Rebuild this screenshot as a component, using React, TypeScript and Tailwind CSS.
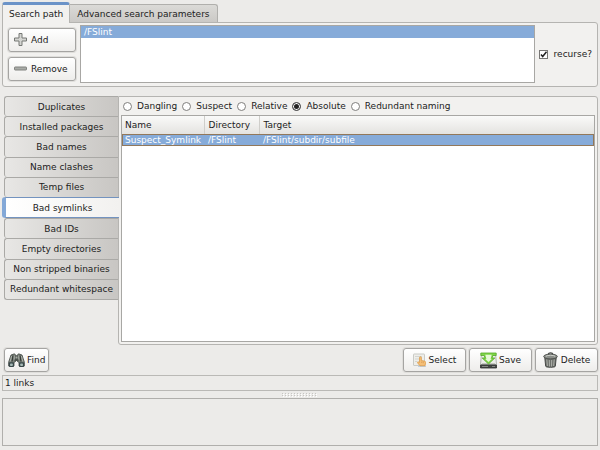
import { useState } from 'react';
import type { ReactNode } from 'react';

const CHECKS = [
  'Duplicates',
  'Installed packages',
  'Bad names',
  'Name clashes',
  'Temp files',
  'Bad symlinks',
  'Bad IDs',
  'Empty directories',
  'Non stripped binaries',
  'Redundant whitespace',
];

const LINK_TYPES = ['Dangling', 'Suspect', 'Relative', 'Absolute', 'Redundant naming'];

const LINKS = [{ name: 'Suspect_Symlink', dir: '/FSlint', target: '/FSlint/subdir/subfile' }];

function PlusIcon() {
  return (
    <svg width="13" height="13" viewBox="0 0 13 13">
      <path d="M5 .5h3V5h4.500v3H8v4.500H5V8H.5V5H5z" fill="#d4d5d2" stroke="#767875" />
    </svg>
  );
}

function MinusIcon() {
  return (
    <svg width="13" height="13" viewBox="0 0 13 13">
      <rect x=".5" y="5" width="12" height="3" rx=".6" fill="#a9aba7" stroke="#80827f" />
    </svg>
  );
}

function BinocularsIcon() {
  return (
    <svg width="17" height="16" viewBox="0 0 17 16">
      <path d="M3 3 6.500 1.800 8 3.500V9L6 10.500V14H.7V10z" fill="#7b827b" stroke="#414843" strokeWidth=".8" />
      <path d="M14 3 10.500 1.800 9 3.500V9l2 1.500V14h5.300V10z" fill="#7b827b" stroke="#414843" strokeWidth=".8" />
      <path d="M6.500 3.500h4V9h-4z" fill="#4c534e" />
      <path d="M7.500 4.500h2v2h-2z" fill="#a4aaa2" />
      <path d="M5 3.500 4 9.500M12 3.500l1 6" stroke="#343a36" strokeWidth="1.200" />
      <path d="M3.600 4 2.200 9.500M6.300 3.500v4M10.700 3.500v4M13.400 4l1.400 5.500" stroke="#b9beb6" strokeWidth=".8" />
      <rect x=".8" y="10.300" width="5.200" height="4.700" rx="1" fill="#39484a" />
      <rect x="11" y="10.300" width="5.200" height="4.700" rx="1" fill="#39484a" />
      <rect x="2" y="11.500" width="2.800" height="2.500" rx=".8" fill="#a5b8b5" />
      <rect x="12.200" y="11.500" width="2.800" height="2.500" rx=".8" fill="#a5b8b5" />
    </svg>
  );
}

function SelectIcon() {
  return (
    <svg width="13" height="16" viewBox="0 0 13 16">
      <rect x=".5" y="2" width="11" height="11.500" rx=".5" fill="#eeeeea" stroke="#c9cac5" />
      <path d="M2 4.500h7M2 7h4M2 9.500h2.500" stroke="#d3d4cf" />
      <path d="M5 14h8v1H5z" fill="#bfcfe2" />
      <path
        d="M6.500 5.500c0-1 1.900-1 1.900 0V8.500l3 .6c1 .2 1.300.8 1.200 1.600l-.5 3.100H7L4.700 11c-.6-1 .7-1.600 1.800-.6z"
        fill="#f5bf78"
        stroke="#d9953f"
        strokeWidth=".7"
      />
      <path d="M8.700 9.500v1.500M10.300 9.700v1.500" stroke="#cf9249" strokeWidth=".6" />
    </svg>
  );
}

function SaveIcon() {
  return (
    <svg width="17" height="17" viewBox="0 0 17 17">
      <path d="M1.500 1.500h14l1 11H.5z" fill="#eceeea" stroke="#a0a39d" strokeWidth=".8" />
      <path d="M2 11.500h13" stroke="#c5c8c1" />
      <path d="M.5 13h16v3H.5z" fill="#454846" stroke="#2c2f2d" strokeWidth=".8" />
      <path d="M2 14.500h6M12 14.500h3" stroke="#8b8e89" strokeWidth=".9" />
      <path d="M.8 1h15.400v2.500h-3.400L12 6h2.800l-6.300 6-6.300-6H5l-.8-2.500H.8z" fill="#7fd548" stroke="#55a92a" strokeWidth=".8" />
      <path d="M5.300 2.700h6.400l-1.100 4.400h1.100L8.500 10 5.300 7.100h1.100z" fill="#e6f9d6" />
    </svg>
  );
}

function TrashIcon() {
  return (
    <svg width="15" height="16" viewBox="0 0 15 16">
      <path d="M1.700 5h11.600l-1 9.300c-.2 1.300-9.400 1.300-9.600 0z" fill="#6d706b" stroke="#3a3c3a" strokeWidth=".9" />
      <path d="m3.800 7.500.6 6.500M6.300 8l.2 6.500M8.700 8l-.2 6.500M11.200 7.500l-.6 6.500" stroke="#b4b7b1" strokeWidth=".9" />
      <ellipse cx="7.500" cy="4.500" rx="6.800" ry="2.400" fill="#8b8e89" stroke="#4a4d4a" strokeWidth=".9" />
      <path d="M2.800 4.300C4.300 2.900 10.700 2.900 12.200 4.300" stroke="#d0d3cd" fill="none" />
      <path d="M5.300 2.600C5.300.3 9.700.3 9.700 2.600" stroke="#464946" strokeWidth="1.200" fill="none" />
    </svg>
  );
}

interface ButtonProps {
  icon: ReactNode;
  label: string;
  className: string;
}

function Button({ icon, label, className }: ButtonProps) {
  return (
    <button
      type="button"
      className={`flex items-center rounded-[3px] border border-[#a5a4a2] bg-linear-to-b from-white to-[#eeedeb] h-6 shadow-[0_0_0_1px_#dfdedb] ${className}`}
    >
      {icon}
      {label}
    </button>
  );
}

export default function App() {
  const [check, setCheck] = useState('Bad symlinks');
  const [linkType, setLinkType] = useState('Absolute');
  const [recurse, setRecurse] = useState(true);

  return (
    <div className="flex min-h-screen flex-col bg-[#ecebe9] px-0.5 pt-0.5 pb-1 font-['DejaVu_Sans',sans-serif] text-[9px] leading-3 text-[#1c1c1c]">
      {/* search path notebook */}
      <div role="tablist" className="flex items-end">
        <button
          type="button"
          role="tab"
          aria-selected="true"
          className="relative z-10 -mb-px h-[21px] rounded-t-[3px] border border-b-0 border-t-[3px] border-[#b5b4b1] border-t-[#6b93c8] bg-[#f2f1ef] px-1.5"
        >
          Search path
        </button>
        <button
          type="button"
          role="tab"
          aria-selected="false"
          className="h-[18px] rounded-tr-[3px] border border-b-0 border-l-0 border-[#b0afac] bg-linear-to-b from-[#dbdad7] to-[#cbc9c6] px-[7px]"
        >
          Advanced search parameters
        </button>
      </div>
      <section className="flex items-center gap-1 rounded-b-[3px] rounded-tr-[3px] border border-[#b5b4b1] bg-[#f2f1ef] pt-0.5 pr-[5px] pb-[3px] pl-[5px]">
        <div className="flex w-[68px] flex-col gap-[5px]">
          <Button icon={<PlusIcon />} label="Add" className="gap-1 px-[5px]" />
          <Button icon={<MinusIcon />} label="Remove" className="gap-1 px-[5px]" />
        </div>
        <ul className="h-[58px] flex-1 border border-[#a8a7a4] bg-white">
          <li className="bg-[#86abd9] px-[3px] text-white">/FSlint</li>
        </ul>
        <label className="flex items-center gap-1.5">
          <span className="relative flex">
            <input
              type="checkbox"
              checked={recurse}
              onChange={e => setRecurse(e.target.checked)}
              className="size-[9px] appearance-none border border-[#777674] bg-white"
            />
            {recurse && (
              <svg width="9" height="9" viewBox="0 0 9 9" className="pointer-events-none absolute inset-0">
                <path d="m2 4.500 1.700 2L7.500 1.800" fill="none" stroke="#222" strokeWidth="1.500" />
              </svg>
            )}
          </span>
          recurse?
        </label>
      </section>

      {/* checks notebook, tabs on the left */}
      <main className="mt-[9px] flex flex-1">
        <div role="tablist" className="flex h-[204px] w-[116px] flex-col pl-0.5">
          {CHECKS.map(name => (
            <button
              key={name}
              type="button"
              role="tab"
              aria-selected={name === check}
              onClick={() => setCheck(name)}
              className={`flex-1 rounded-l-[3px] border border-r-0 text-center whitespace-nowrap ${
                name === check
                  ? 'relative z-10 -mr-px -ml-0.5 border-l-4 border-[#7393bf] border-l-[#83a8d7] bg-linear-to-r from-white to-[#f2f1ef]'
                  : 'border-b-0 border-[#aaa9a6] bg-linear-to-r from-[#e8e7e5] to-[#c8c6c3] last:border-b'
              }`}
            >
              {name}
            </button>
          ))}
        </div>
        <section className="flex flex-1 flex-col rounded-r-[3px] rounded-bl-[3px] border border-[#b5b4b1] bg-[#f2f1ef] px-0.5 pb-0.5">
          <div className="flex h-[18px] items-center gap-[5px] pl-0.5">
            {LINK_TYPES.map(type => (
              <label key={type} className="flex items-center gap-[5px]">
                <input
                  type="radio"
                  name="link-type"
                  checked={type === linkType}
                  onChange={() => setLinkType(type)}
                  className="size-[9px] appearance-none rounded-full border border-[#807f7d] bg-white checked:border-[#555] checked:bg-[#222] checked:shadow-[inset_0_0_0_1px_white]"
                />
                {type}
              </label>
            ))}
          </div>
          <div className="flex-1 border border-[#a8a7a4] bg-white">
            <table className="w-full table-fixed border-collapse text-left">
              <thead>
                <tr className="h-[18px] bg-linear-to-b from-[#fafaf9] to-[#e4e3e0]">
                  <th className="w-[82px] border-r border-[#cfceca] px-[3px] py-0 font-normal">Name</th>
                  <th className="w-[55px] border-r border-[#cfceca] px-1 py-0 font-normal">Directory</th>
                  <th className="px-1 py-0 font-normal">Target</th>
                </tr>
              </thead>
              <tbody>
                {LINKS.map(link => (
                  <tr key={link.name} className="bg-[#86abd9] text-white outline outline-1 -outline-offset-1 outline-[#92785a]">
                    <td className="px-[3px] py-0 whitespace-nowrap">{link.name}</td>
                    <td className="px-1 py-0">{link.dir}</td>
                    <td className="px-1 py-0">{link.target}</td>
                  </tr>
                ))}
              </tbody>
            </table>
          </div>
        </section>
      </main>

      <div className="mt-[3px] flex gap-[3px] pl-0.5">
        <Button icon={<BinocularsIcon />} label="Find" className="mr-auto gap-0.5 px-[3px]" />
        <Button icon={<SelectIcon />} label="Select" className="w-[63px] justify-center gap-[3px]" />
        <Button icon={<SaveIcon />} label="Save" className="w-[63px] justify-center gap-0.5" />
        <Button icon={<TrashIcon />} label="Delete" className="w-[63px] justify-center gap-[3px]" />
      </div>

      <p role="status" className="mt-[3px] h-4 border border-[#bab9b6] px-0.5 py-px">1 links</p>
      <div className="flex h-[7px] items-center justify-center">
        <svg width="36" height="4">
          <defs>
            <pattern id="grip" width="3" height="2" patternUnits="userSpaceOnUse">
              <rect width="1" height="1" fill="#c6c5c2" />
              <rect x="1" y="1" width="1" height="1" fill="#fff" />
            </pattern>
          </defs>
          <rect width="36" height="4" fill="url(#grip)" />
        </svg>
      </div>
      <div className="h-12 border border-[#b0afac]" />
    </div>
  );
}
